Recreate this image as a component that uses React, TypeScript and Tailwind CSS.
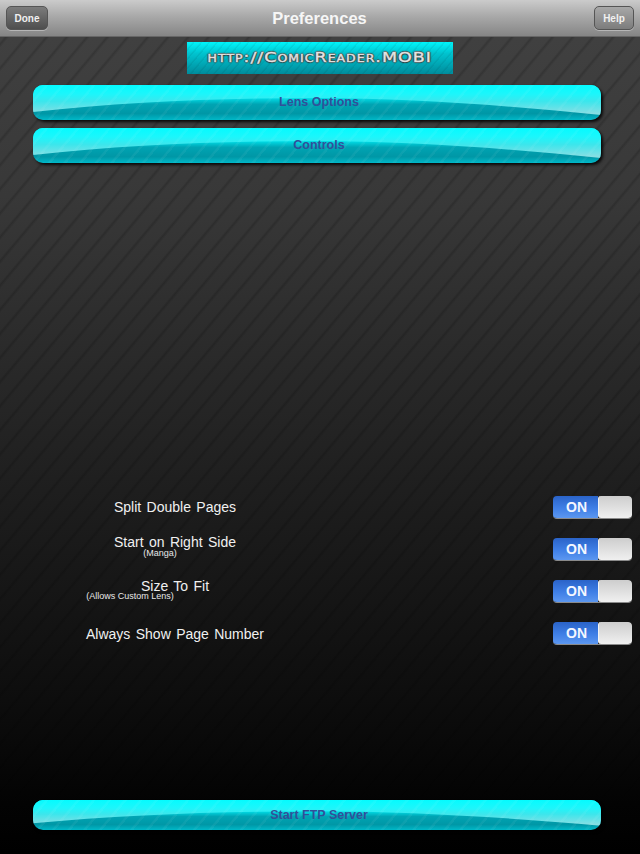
const font = 'font-["Liberation_Sans",Arial,sans-serif]'

const GlossButton = ({ label, className }: { label: string; className: string }) => {
  return (
    <button
      className={`relative mx-[33px] block w-[568px] overflow-hidden rounded-[10px] bg-[linear-gradient(180deg,#00f4fa_0%,#00e6ef_35%,#00a4b3_55%,#0097a6_82%,#00b8c8_100%)] shadow-[2px_2px_3px_rgba(0,0,0,0.85)] ${className}`}
    >
      <svg className="absolute inset-0 h-full w-full" viewBox="0 0 568 35" preserveAspectRatio="none">
        <defs>
          <linearGradient id="gloss" x1="0" y1="0" x2="0" y2="1">
            <stop offset="0" stopColor="#05fbff" />
            <stop offset="0.3" stopColor="#1cf6fb" />
            <stop offset="0.55" stopColor="#3ce6ec" />
            <stop offset="1" stopColor="#8fdde2" />
          </linearGradient>
        </defs>
        <path d="M0 0H568V30C480 21 380 13 284 13C190 13 90 17 0 27Z" fill="url(#gloss)" />
      </svg>
      <span className="absolute inset-0 bg-[repeating-linear-gradient(130deg,rgba(255,255,255,0)_0px,rgba(255,255,255,0)_9px,rgba(255,255,255,0.05)_10px,rgba(255,255,255,0.05)_12px)]" />
      <span className={`relative block pl-[4px] text-[12.5px] font-bold text-[#31509a] ${font}`}>{label}</span>
    </button>
  )
}

const BarButton = ({ label, dark }: { label: string; dark?: boolean }) => {
  return (
    <button
      className={`flex h-[24px] items-center justify-center rounded-[5px] border border-[#555] text-[10px] font-bold text-[#f0f0f0] shadow-[0_1px_0_rgba(255,255,255,0.35)] ${font} ${
        dark
          ? 'w-[42px] bg-[linear-gradient(180deg,#7c7c7c,#4e4e4e)]'
          : 'w-[40px] bg-[linear-gradient(180deg,#a8a8a8,#7c7c7c)]'
      }`}
    >
      {label}
    </button>
  )
}

const Toggle = () => {
  return (
    <div className="flex h-[23px] w-[79px] overflow-hidden rounded-[4px] border-b border-[#8a8a8a]">
      <div
        className={`flex w-[45px] items-center justify-center bg-[linear-gradient(180deg,#2a63c8,#3f7fe6_55%,#5c97f0)] pl-[2px] text-[14px] font-bold text-[#f4f7ff] ${font}`}
      >
        ON
      </div>
      <div className="flex-1 rounded-[3px] border-l border-[#f4f4f4] bg-[linear-gradient(180deg,#cdcdcd,#f0f0f0)]" />
    </div>
  )
}

const SettingRow = ({
  label,
  sub,
  rowClass,
  subClass,
}: {
  label: string
  sub?: string
  rowClass: string
  subClass?: string
}) => {
  return (
    <div className="flex h-[42px] items-start justify-between pr-[8px]">
      <div className={`flex w-[350px] flex-col items-center ${rowClass} ${font}`}>
        <span className="text-[14px] leading-[12px] text-[#f0f0f0] [word-spacing:1.5px]">{label}</span>
        {sub && <span className={`text-[9px] leading-[8px] text-[#e8e8e8] ${subClass}`}>{sub}</span>}
      </div>
      <Toggle />
    </div>
  )
}

const App = () => {
  return (
    <div className="flex h-[854px] w-[640px] flex-col overflow-hidden bg-[image:repeating-linear-gradient(130deg,rgba(0,0,0,0)_0px,rgba(0,0,0,0)_11px,rgba(0,0,0,0.17)_13px,rgba(0,0,0,0)_15.5px),linear-gradient(180deg,#424242_0%,#383838_23%,#1f1f1f_56%,#0d0d0d_82%,#030303_94%,#000000_100%)]">
      <header className="flex h-[37px] shrink-0 items-center justify-between border-b border-[#666] bg-[linear-gradient(180deg,#cbcbcb,#a9a9a9_45%,#858585)] px-[6px]">
        <BarButton label="Done" dark />
        <h1 className={`pr-[3px] text-[16.5px] font-bold text-[#f6f6f6] ${font}`}>Preferences</h1>
        <BarButton label="Help" />
      </header>

      <a className="mx-auto mt-[5px] flex h-[32px] w-[266px] shrink-0 items-center justify-center bg-[image:repeating-linear-gradient(130deg,rgba(0,0,0,0)_0px,rgba(0,0,0,0)_4px,rgba(0,0,0,0.06)_5px,rgba(0,0,0,0.06)_6px),linear-gradient(180deg,#00f6fb,#00c4d0_35%,#008c9c)]">
        <span className='scale-x-[1.25] pb-[2px] font-["DejaVu_Sans",sans-serif] text-[14px] tracking-[0.8px] text-[#e6e6e6] [-webkit-text-stroke:0.4px_#dddddd] [font-variant:small-caps] [text-shadow:0_1px_1px_#333,0_-1px_1px_#444,1px_0_1px_#444,-1px_0_1px_#444]'>
          http://ComicReader.MOBI
        </span>
      </a>

      <GlossButton label="Lens Options" className="mt-[11px] h-[35px] shrink-0" />
      <GlossButton label="Controls" className="mt-[8px] h-[35px] shrink-0" />

      <section className="mt-[333px] flex flex-col">
        <SettingRow label="Split Double Pages" rowClass="pt-[5px]" />
        <SettingRow label="Start on Right Side" sub="(Manga)" rowClass="mt-[-2px]" subClass="mt-[1px] mr-[30px]" />
        <SettingRow label="Size To Fit" sub="(Allows Custom Lens)" rowClass="" subClass="mr-[90px]" />
        <SettingRow label="Always Show Page Number" rowClass="pt-[6px]" />
      </section>

      <div className="flex-1" />
      <GlossButton label="Start FTP Server" className="mb-[24px] h-[30px] shrink-0" />
    </div>
  )
}

export default App
